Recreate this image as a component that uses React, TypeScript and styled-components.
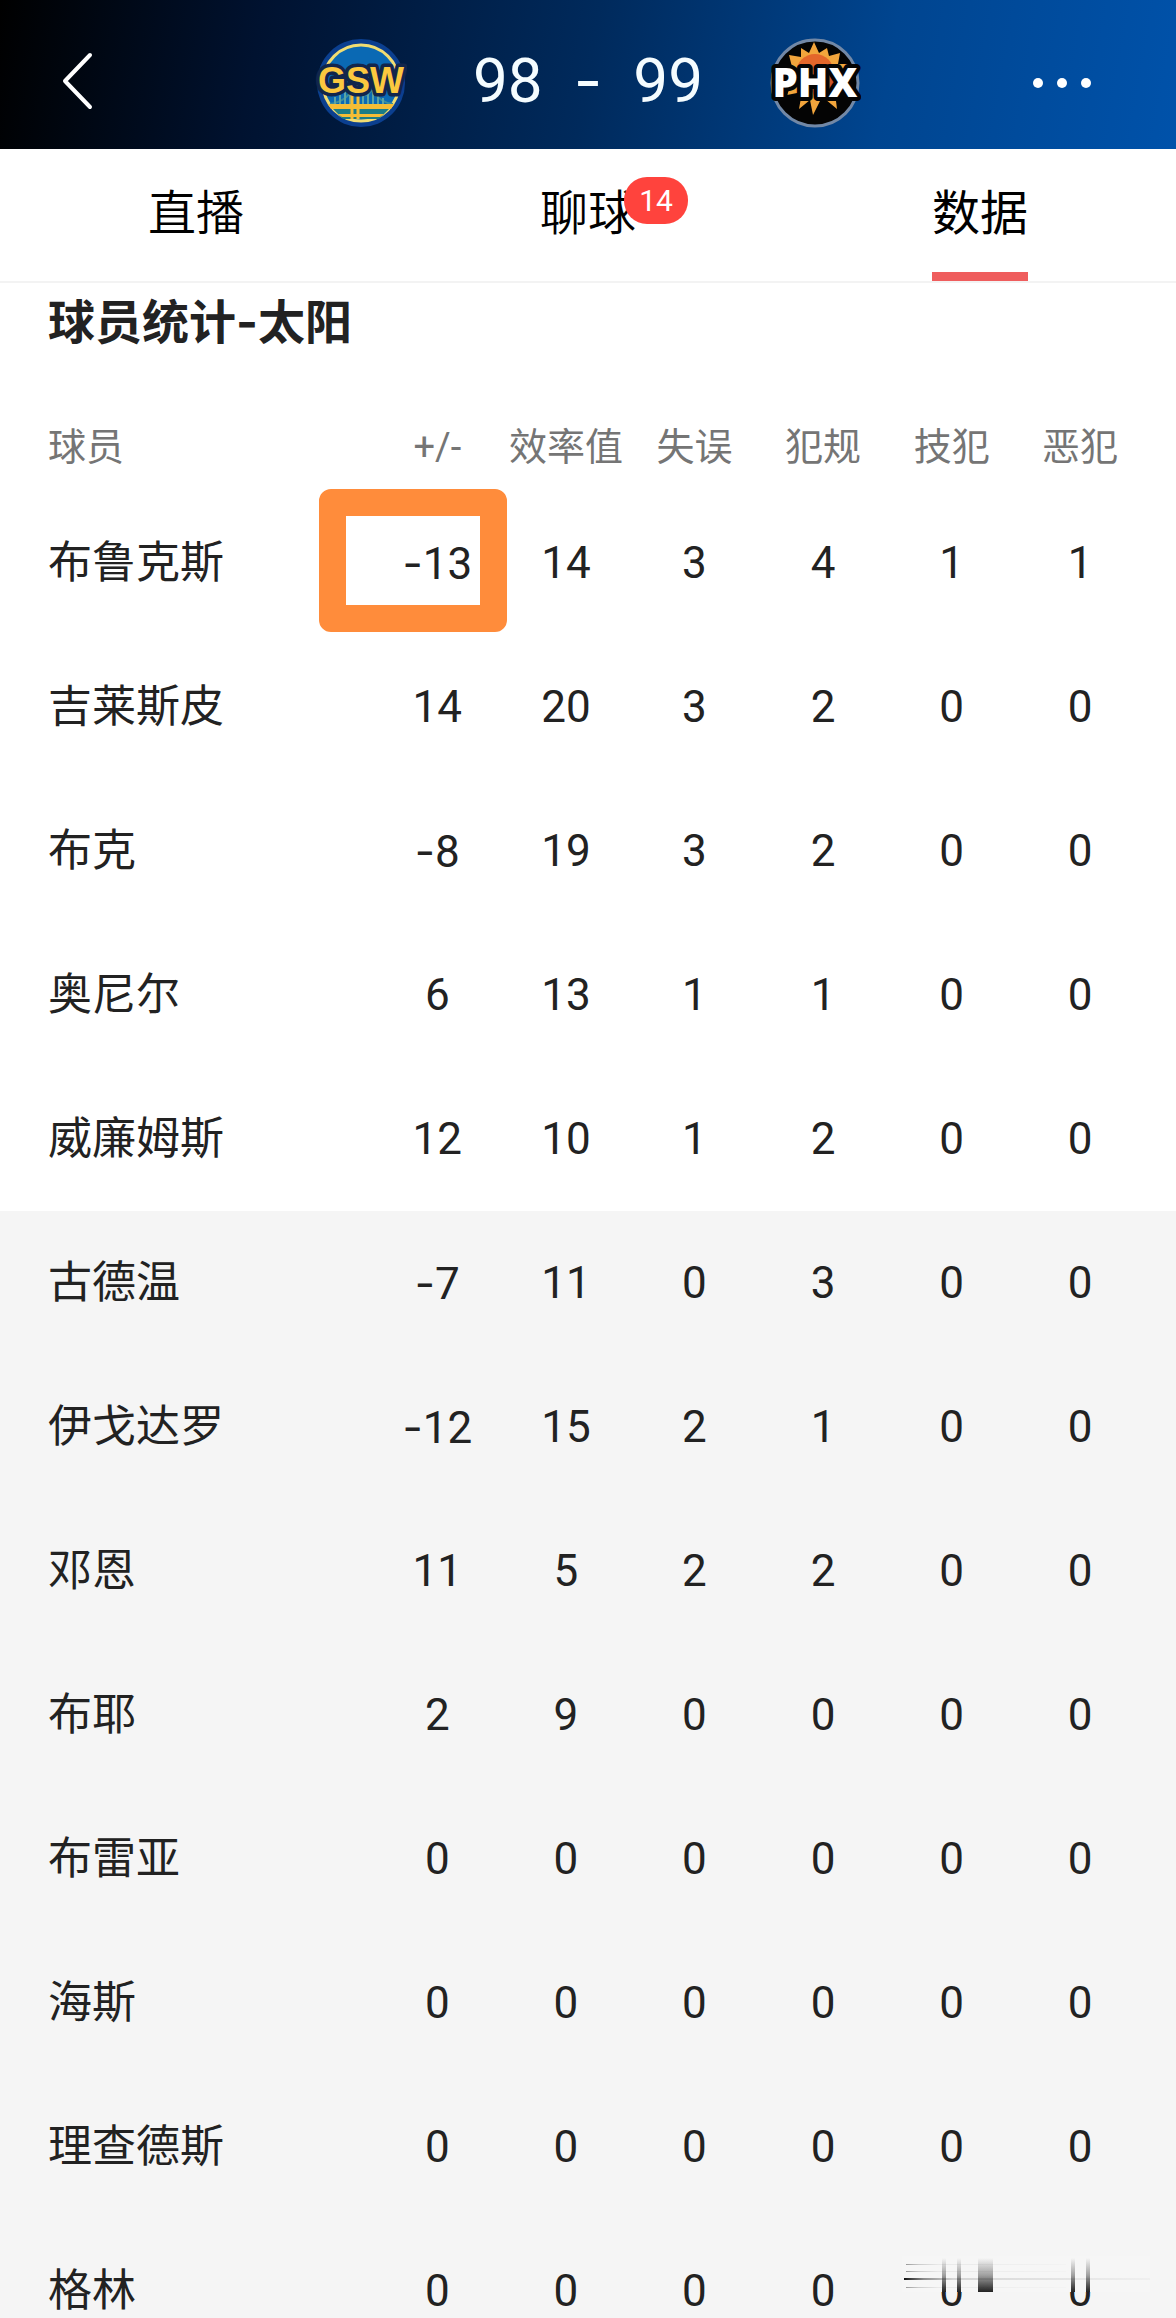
import React from 'react';
import styled, { createGlobalStyle } from 'styled-components';

const GlobalStyle = createGlobalStyle`
  *, *::before, *::after { box-sizing: border-box; }
  body {
    margin: 0;
    background: #ffffff;
    font-family: Roboto, "Noto Sans CJK SC", sans-serif;
    color: #222222;
  }
`;

const Screen = styled.div`
  position: relative;
  display: flex;
  flex-direction: column;
  height: 100vh;
  overflow: hidden;
`;

const TopBar = styled.header`
  display: grid;
  grid-template-columns: 1fr auto 1fr;
  align-items: center;
  flex: none;
  height: 149px;
  padding: 16px 52px 0;
  background: linear-gradient(100deg, #000000 0%, #001230 22%, #002a5c 50%, #004590 75%, #0052aa 100%);
`;

const IconButton = styled.button<{ $end?: boolean }>`
  display: flex;
  justify-self: ${(p) => (p.$end ? 'end' : 'start')};
  margin-right: ${(p) => (p.$end ? '28px' : '0')};
  padding: 0;
  border: 0;
  background: none;
  color: #ffffff;
`;

const ScoreBoard = styled.div`
  display: flex;
  align-items: center;
  gap: 66px;
`;

const Score = styled.div`
  display: flex;
  justify-content: space-between;
  width: 230px;
  padding-bottom: 4px;
  font-size: 62px;
  line-height: 72px;
  color: #f4fcff;
`;

const Dash = styled.span`
  font-family: Inter, Roboto, sans-serif;
`;

const LogoText = styled.text<{ $heavy?: boolean }>`
  font-family: ${(p) => (p.$heavy ? '"Open Sans"' : '"Liberation Sans"')}, Arial, sans-serif;
  font-weight: ${(p) => (p.$heavy ? 800 : 700)};
  text-anchor: middle;
  paint-order: stroke;
  stroke-linejoin: round;
`;

const Tabs = styled.nav`
  display: grid;
  grid-template-columns: repeat(3, 1fr);
  flex: none;
  height: 134px;
  border-bottom: 2px solid #f3f3f3;
`;

const Tab = styled.button<{ $active?: boolean }>`
  display: flex;
  justify-content: center;
  padding: 0;
  border: 0;
  background: none;
  color: #000000;
  font-family: inherit;
  font-size: 48px;
  font-weight: ${(p) => (p.$active ? 400 : 350)};
  line-height: 116px;
`;

const TabLabel = styled.span<{ $active?: boolean }>`
  position: relative;
  height: 132px;
  padding-top: 7px;
  border-bottom: 9px solid ${(p) => (p.$active ? '#ef5d5d' : 'transparent')};
`;

const Badge = styled.span`
  position: absolute;
  top: 28px;
  left: calc(100% - 12px);
  width: 64px;
  height: 47px;
  border-radius: 23px;
  background: #ff433d;
  color: #ffffff;
  font-size: 30px;
  font-weight: 400;
  line-height: 47px;
  text-align: center;
`;

const Content = styled.main`
  flex: 1;
  min-height: 0;
  overflow-y: auto;
  scrollbar-width: none;
`;

const SectionTitle = styled.h2`
  margin: 0 0 42px;
  padding: 0 48px;
  font-family: Inter, "Noto Sans CJK SC", sans-serif;
  font-size: 47px;
  font-weight: 700;
  line-height: 78px;
`;

const StatsTable = styled.table`
  width: 100%;
  table-layout: fixed;
  border-collapse: collapse;
`;

const NameCol = styled.col`
  width: 373px;
`;

const LastCol = styled.col`
  width: 160px;
`;

const HeadCell = styled.th`
  height: 88px;
  padding: 0;
  color: #757575;
  font-size: 38px;
  font-weight: 400;
  line-height: 52px;
  white-space: nowrap;
  &:first-child { padding-left: 48px; text-align: left; }
  &:last-child { padding-right: 32px; }
`;

const Row = styled.tr<{ $bench: boolean }>`
  background: ${(p) => (p.$bench ? '#f5f5f5' : '#ffffff')};
`;

const NameCell = styled.th`
  height: 144px;
  padding: 0 0 0 48px;
  font-size: 44px;
  font-weight: 400;
  line-height: 52px;
  text-align: left;
  white-space: nowrap;
`;

const StatCell = styled.td`
  position: relative;
  height: 144px;
  padding: 0;
  font-size: 44px;
  line-height: 52px;
  text-align: center;
  &:last-child { padding-right: 32px; }
`;

const Highlight = styled.span`
  position: absolute;
  top: -2px;
  right: -5px;
  bottom: 3px;
  left: -54px;
  border: 27px solid #ff8c3b;
  border-radius: 12px;
`;

const Smudge = styled.svg`
  position: absolute;
  right: 26px;
  bottom: 24px;
  pointer-events: none;
`;

const BackIcon = () => (
  <svg width="50" height="70" viewBox="0 0 50 70" fill="none" stroke="currentColor" strokeWidth="4" strokeLinecap="round" strokeLinejoin="round">
    <path d="M38 7 13 33 38 59" />
  </svg>
);

const MoreIcon = () => (
  <svg width="68" height="20" viewBox="0 0 68 20" fill="currentColor">
    <circle cx="10" cy="10" r="5" />
    <circle cx="34" cy="10" r="5" />
    <circle cx="58" cy="10" r="5" />
  </svg>
);

const WarriorsLogo = () => (
  <svg width="92" height="92" viewBox="0 0 92 92">
    <circle cx="46" cy="46" r="44" fill="#0b3f8f" />
    <circle cx="46" cy="46" r="38" fill="#0a69b4" stroke="#f1dd72" strokeWidth="3" />
    <path d="M15 67Q34 64 40 47Q50 66 56 53Q66 66 78 67" fill="none" stroke="#3d8f9a" strokeWidth="2" />
    <path d="M20 60V67M25 56V67M30 54V67M35 50V67M48 52V67M53 54V67M58 53V67M63 57V67M68 61V67" stroke="#5ba3a4" strokeWidth="2" />
    <path d="M18 72H74L64 82H28Z" fill="#1c7c86" />
    <path d="M13 67H79L76 72H16ZM23 77H69L65 80H27Z" fill="#f6bd35" />
    <path d="M37 46V82M43 46V82" stroke="#f6bd35" strokeWidth="3" />
    <LogoText x="46" y="56" fontSize="36" fill="#fbc83f" stroke="#12264c" strokeWidth="7">GSW</LogoText>
  </svg>
);

const SunsLogo = () => (
  <svg width="92" height="92" viewBox="0 0 92 92">
    <circle cx="46" cy="46" r="43" fill="#040404" stroke="#7288a6" strokeWidth="3" />
    <path d="M45 5 50 16 58 11 60 19 71 16 69 27 80 27 71 38 78 44 66 56 68 72 56 62 51 64 44 78 41 63 30 72 33 55 18 58 24 43 14 38 24 34 20 18 32 20 32 11 40 16Z" fill="#f2a53c" />
    <circle cx="46" cy="36" r="19" fill="#e4672b" />
    <path d="M38 40H64V56L46 62Z" fill="#c9562a" />
    <LogoText $heavy x="46" y="60" fontSize="40" fill="#ffffff" stroke="#050505" strokeWidth="8">PHX</LogoText>
  </svg>
);

const formatStat = (value: number) =>
  value < 0 ? <><Dash>-</Dash>{Math.abs(value)}</> : value;

const columns = ['+/-', '效率值', '失误', '犯规', '技犯', '恶犯'];

const players: { name: string; stats: number[]; highlighted?: boolean }[] = [
  { name: '布鲁克斯', stats: [-13, 14, 3, 4, 1, 1], highlighted: true },
  { name: '吉莱斯皮', stats: [14, 20, 3, 2, 0, 0] },
  { name: '布克', stats: [-8, 19, 3, 2, 0, 0] },
  { name: '奥尼尔', stats: [6, 13, 1, 1, 0, 0] },
  { name: '威廉姆斯', stats: [12, 10, 1, 2, 0, 0] },
  { name: '古德温', stats: [-7, 11, 0, 3, 0, 0] },
  { name: '伊戈达罗', stats: [-12, 15, 2, 1, 0, 0] },
  { name: '邓恩', stats: [11, 5, 2, 2, 0, 0] },
  { name: '布耶', stats: [2, 9, 0, 0, 0, 0] },
  { name: '布雷亚', stats: [0, 0, 0, 0, 0, 0] },
  { name: '海斯', stats: [0, 0, 0, 0, 0, 0] },
  { name: '理查德斯', stats: [0, 0, 0, 0, 0, 0] },
  { name: '格林', stats: [0, 0, 0, 0, 0, 0] },
];

const STARTERS = 5;

export default function App() {
  return (
    <Screen>
      <GlobalStyle />
      <TopBar>
        <IconButton aria-label="返回"><BackIcon /></IconButton>
        <ScoreBoard>
          <WarriorsLogo />
          <Score><span>98</span><Dash>-</Dash><span>99</span></Score>
          <SunsLogo />
        </ScoreBoard>
        <IconButton $end aria-label="更多"><MoreIcon /></IconButton>
      </TopBar>
      <Tabs>
        <Tab><TabLabel>直播</TabLabel></Tab>
        <Tab><TabLabel>聊球<Badge>14</Badge></TabLabel></Tab>
        <Tab $active><TabLabel $active>数据</TabLabel></Tab>
      </Tabs>
      <Content>
        <SectionTitle>球员统计-太阳</SectionTitle>
        <StatsTable>
          <colgroup>
            <NameCol />
            <col span={5} />
            <LastCol />
          </colgroup>
          <thead>
            <tr>
              <HeadCell scope="col">球员</HeadCell>
              {columns.map((c) => <HeadCell key={c} scope="col">{c}</HeadCell>)}
            </tr>
          </thead>
          <tbody>
            {players.map((p, i) => (
              <Row key={p.name} $bench={i >= STARTERS}>
                <NameCell scope="row">{p.name}</NameCell>
                {p.stats.map((v, j) => (
                  <StatCell key={columns[j]}>
                    {formatStat(v)}
                    {p.highlighted && j === 0 && <Highlight />}
                  </StatCell>
                ))}
              </Row>
            ))}
          </tbody>
        </StatsTable>
      </Content>
      <Smudge width="248" height="38" viewBox="0 0 248 38">
        <defs>
          <linearGradient id="down" x1="0" y1="0" x2="0" y2="1">
            <stop offset="0" stopColor="#222222" stopOpacity="0" />
            <stop offset="0.5" stopColor="#222222" stopOpacity="0.4" />
            <stop offset="1" stopColor="#222222" />
          </linearGradient>
          <linearGradient id="across" x1="0" y1="0" x2="1" y2="0">
            <stop offset="0" stopColor="#111111" />
            <stop offset="0.08" stopColor="#222222" stopOpacity="0.5" />
            <stop offset="0.2" stopColor="#222222" stopOpacity="0.15" />
            <stop offset="1" stopColor="#222222" stopOpacity="0.03" />
          </linearGradient>
        </defs>
        <rect width="248" height="36" fill="#f6f6f6" />
        <rect x="40" y="2" width="4" height="34" fill="url(#down)" />
        <rect x="55" y="2" width="4" height="34" fill="url(#down)" />
        <rect x="76" y="2" width="15" height="34" fill="url(#down)" />
        <rect x="169" y="2" width="4" height="34" fill="url(#down)" />
        <rect x="184" y="2" width="4" height="34" fill="url(#down)" />
        <rect x="2" y="22" width="246" height="2" fill="url(#across)" />
        <g opacity="0.4">
          <rect x="4" y="8" width="160" height="1" fill="url(#across)" />
          <rect x="4" y="15" width="160" height="1" fill="url(#across)" />
          <rect x="4" y="31" width="160" height="1" fill="url(#across)" />
        </g>
      </Smudge>
    </Screen>
  );
}
